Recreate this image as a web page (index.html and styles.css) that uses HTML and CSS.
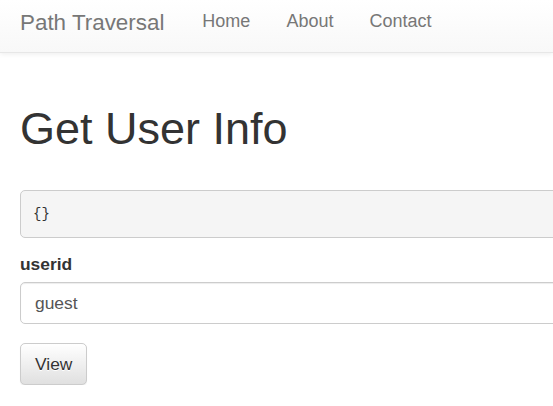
FILE: index.html
```html
<!DOCTYPE html>
<html lang="en">
<head>
    <meta charset="UTF-8">
    <meta name="viewport" content="width=device-width, initial-scale=1.0">
    <title>Path Traversal</title>
    <link rel="stylesheet" href="styles.css">
</head>
<body>
    <nav class="navbar">
        <a class="brand" href="#">Path Traversal</a>
        <ul class="nav">
            <li><a href="#">Home</a></li>
            <li><a href="#">About</a></li>
            <li><a href="#">Contact</a></li>
        </ul>
    </nav>
    <div class="container">
        <h1>Get User Info</h1>
        <pre class="result">{}</pre>
        <form class="form">
            <label class="label" for="userid">userid</label>
            <input class="input" type="text" id="userid" name="userid" value="guest">
            <button class="button" type="button">View</button>
        </form>
    </div>
</body>
</html>
```

FILE: styles.css
```css
html, body {
    overflow: hidden;
}
body {
    margin: 0;
    font-family: "Liberation Sans", Arial, sans-serif;
    font-size: 17.4px;
    line-height: 1.42857;
    color: #333;
    background-color: #fff;
}
.navbar {
    display: flex;
    align-items: flex-start;
    height: 52px;
    padding-left: 20px;
    background-image: linear-gradient(to bottom, #fff 0, #f8f8f8 100%);
    border-bottom: 1px solid #e7e7e7;
    box-shadow: inset 0 1px 0 rgba(255, 255, 255, .15), 0 1px 5px rgba(0, 0, 0, .075);
}
.brand {
    padding-top: 7px;
    font-size: 22.4px;
    color: #777;
    text-decoration: none;
    margin-right: 20px;
    text-shadow: 0 1px 0 rgba(255, 255, 255, .25);
}
.nav {
    display: flex;
    list-style: none;
    margin: 0;
    padding: 0;
}
.nav a {
    display: block;
    padding: 9px 18px 0;
    font-size: 18px;
    color: #777;
    text-decoration: none;
}
.container {
    width: 800px;
    padding: 0 20px;
}
h1 {
    font-size: 45px;
    font-weight: 500;
    line-height: 1.1;
    margin: 51px 0 36px;
}
.result {
    margin: 0 0 14px;
    padding: 11px 12px;
    font-family: "Liberation Mono", "DejaVu Sans Mono", monospace;
    font-size: 14px;
    line-height: 24px;
    color: #333;
    background-color: #f5f5f5;
    border: 1px solid #ccc;
    border-radius: 5px;
}
.label {
    display: block;
    font-weight: bold;
    margin-bottom: 6px;
}
.input {
    display: block;
    box-sizing: border-box;
    width: 100%;
    height: 42px;
    padding: 7px 14px;
    font-family: inherit;
    font-size: 17.4px;
    color: #555;
    background-color: #fff;
    border: 1px solid #ccc;
    border-radius: 5px;
    box-shadow: inset 0 1px 1px rgba(0, 0, 0, .075);
    margin-bottom: 19px;
}
.button {
    height: 42px;
    padding: 7px 14px;
    font-family: inherit;
    font-size: 17.4px;
    color: #333;
    background-image: linear-gradient(to bottom, #fff 0, #e0e0e0 100%);
    border: 1px solid #ccc;
    border-radius: 5px;
    text-shadow: 0 1px 0 #fff;
    box-shadow: inset 0 1px 0 rgba(255, 255, 255, .15), 0 1px 1px rgba(0, 0, 0, .075);
    cursor: pointer;
}
```
